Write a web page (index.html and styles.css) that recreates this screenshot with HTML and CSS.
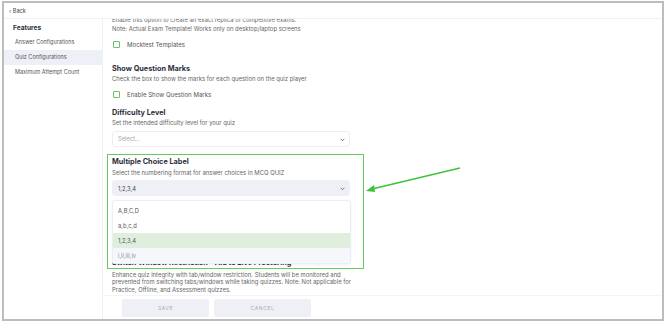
FILE: index.html
```html
<!DOCTYPE html>
<html lang="en">
<head>
  <meta charset="UTF-8">
  <title>Quiz Configurations</title>
  <link rel="stylesheet" href="styles.css">
</head>
<body>
<div class="frame">
  <div class="topbar"><span class="back">&#8249; Back</span></div>
  <div class="layout">
    <aside class="sidebar">
      <h2>Features</h2>
      <div class="nav-item">Answer Configurations</div>
      <div class="nav-item active">Quiz Configurations</div>
      <div class="nav-item">Maximum Attempt Count</div>
    </aside>

    <main class="main">
      <div class="scroll">
        <p class="desc first">Enable this option to create an exact replica of competitive exams.<br>Note: Actual Exam Template! Works only on desktop/laptop screens</p>
        <label class="check"><span class="box"></span>Mocktest Templates</label>

        <h3 class="title t-marks">Show Question Marks</h3>
        <p class="desc">Check the box to show the marks for each question on the quiz player</p>
        <label class="check"><span class="box"></span>Enable Show Question Marks</label>

        <h3 class="title t-diff">Difficulty Level</h3>
        <p class="desc">Set the intended difficulty level for your quiz</p>
        <div class="select placeholder">Select...<svg class="chev" viewBox="0 0 8 5"><polyline points="1,1 4,4 7,1"/></svg></div>

        <h3 class="title t-mcq">Multiple Choice Label</h3>
        <p class="desc">Select the numbering format for answer choices in MCQ QUIZ</p>
        <div class="select-wrap">
          <div class="select filled">1,2,3,4<svg class="chev" viewBox="0 0 8 5"><polyline points="1,1 4,4 7,1"/></svg></div>
          <ul class="menu">
            <li>A,B,C,D</li>
            <li>a,b,c,d</li>
            <li class="selected">1,2,3,4</li>
            <li class="hover">i,ii,iii,iv</li>
          </ul>
        </div>

        <h3 class="title t-switch">Switch Window Restriction - Aid to Live Proctoring</h3>
        <p class="desc tight">Enhance quiz integrity with tab/window restriction. Students will be monitored and<br>prevented from switching tabs/windows while taking quizzes. Note: Not applicable for<br>Practice, Offline, and Assessment quizzes.</p>
      </div>

      <div class="footer">
        <button class="btn save">SAVE</button>
        <button class="btn cancel">CANCEL</button>
      </div>

      <div class="highlight"></div>
    </main>
  </div>

  <svg class="arrow" width="670" height="322" viewBox="0 0 670 322">
    <line x1="460" y1="168" x2="372" y2="189"/>
    <polygon points="366,191 374,185 375,192"/>
  </svg>
</div>
</body>
</html>
```

FILE: styles.css
```css
* {
  box-sizing: border-box;
}
body {
  margin: 0;
  background: #fff;
  font-family: 'Inter', 'Open Sans', sans-serif;
  color: #333;
}
.frame {
  position: relative;
  width: 662px;
  height: 320px;
  margin: 1px 0 0 2px;
  border: 2px solid #bdbdbd;
  background: #fff;
  display: flex;
  flex-direction: column;
}
.topbar {
  height: 16px;
  border-bottom: 1px solid #f0f1f4;
  padding-left: 5px;
  display: flex;
  align-items: center;
}
.back {
  font-size: 5.6px;
  color: #444;
}
.layout {
  flex: 1;
  display: flex;
  min-height: 0;
}

/* sidebar */
.sidebar {
  width: 99px;
  border-right: 1px solid #f0f1f4;
  padding-top: 3.5px;
}
.sidebar h2 {
  margin: 0 0 2.5px;
  padding-left: 9px;
  font-size: 6.6px;
  line-height: 10px;
  font-weight: 700;
  color: #2c2f3c;
}
.nav-item {
  height: 15px;
  line-height: 15px;
  padding-left: 11px;
  font-size: 5.5px;
  color: #555;
}
.nav-item.active {
  background: #eef0f7;
}

/* main area */
.main {
  position: relative;
  flex: 1;
  display: flex;
  flex-direction: column;
  overflow: hidden;
}
.scroll {
  flex: 1;
  padding-left: 9px;
  min-height: 0;
}
.desc {
  margin: 0;
  font-size: 5.9px;
  line-height: 9px;
  color: #666;
}
.desc.first {
  margin-top: -4.5px;
}
.desc.tight {
  line-height: 7.4px;
}
.check {
  display: flex;
  align-items: center;
  gap: 7px;
  height: 10px;
  margin: 6.5px 0 0 1px;
  font-size: 6.1px;
  color: #555;
}
.box {
  width: 7px;
  height: 7px;
  border: 1px solid #6cc06a;
  border-radius: 1px;
}
.title {
  margin: 0;
  font-size: 7.3px;
  line-height: 11px;
  font-weight: 700;
  color: #2c2f3c;
}
.t-marks { margin-top: 13.5px; }
.t-diff { margin-top: 8px; }
.t-mcq { margin-top: 9.5px; }
.t-mcq + .desc { margin-top: 0.5px; }
.t-switch { margin-top: 61px; }
.t-switch + .desc { margin-top: 3px; }

.select {
  position: relative;
  width: 238px;
  height: 16px;
  margin-top: 3.5px;
  padding-left: 5px;
  border: 1px solid #eceef3;
  border-radius: 3px;
  display: flex;
  align-items: center;
  font-size: 5.8px;
}
.select.placeholder {
  color: #a6a8b2;
}
.select.filled {
  background: #eef0f6;
  border-color: #eef0f6;
  color: #444;
}
.chev {
  position: absolute;
  right: 4px;
  top: 6px;
  width: 5px;
  height: 3.5px;
  fill: none;
  stroke: #555a66;
  stroke-width: 1.3;
}
.select-wrap {
  position: relative;
}
.menu {
  position: absolute;
  left: 0;
  top: 19.5px;
  width: 239px;
  margin: 0;
  padding: 2px 0 0;
  list-style: none;
  background: #fff;
  border: 1px solid #eceef3;
  border-radius: 3px;
  box-shadow: 0 1px 3px rgba(0, 0, 0, 0.06);
  z-index: 2;
}
.menu li {
  height: 15px;
  line-height: 15px;
  padding-left: 5px;
  font-size: 5.8px;
  color: #555;
}
.menu li.selected {
  background: #dfeedd;
}
.menu li.hover {
  background: #f6f7fb;
  color: #8a8ea0;
}

/* footer */
.footer {
  height: 24px;
  border-top: 1px solid #f3f4f7;
  display: flex;
  gap: 5px;
  padding: 3px 0 0 19px;
}
.btn {
  height: 18px;
  border: none;
  border-radius: 2px;
  background: #eef0f6;
  color: #a8aab4;
  font-family: 'Inter', sans-serif;
  font-size: 5px;
  letter-spacing: 0.6px;
}
.btn.save { width: 87px; }
.btn.cancel { width: 97px; }

/* annotations */
.highlight {
  position: absolute;
  left: 4px;
  top: 135px;
  width: 257px;
  height: 115px;
  border: 1.5px solid #62cc5e;
  z-index: 3;
  pointer-events: none;
}
.arrow {
  position: absolute;
  left: -4px;
  top: -3px;
  pointer-events: none;
}
.arrow line {
  stroke: #3fc23a;
  stroke-width: 1.3;
}
.arrow polygon {
  fill: #3fc23a;
}
```
